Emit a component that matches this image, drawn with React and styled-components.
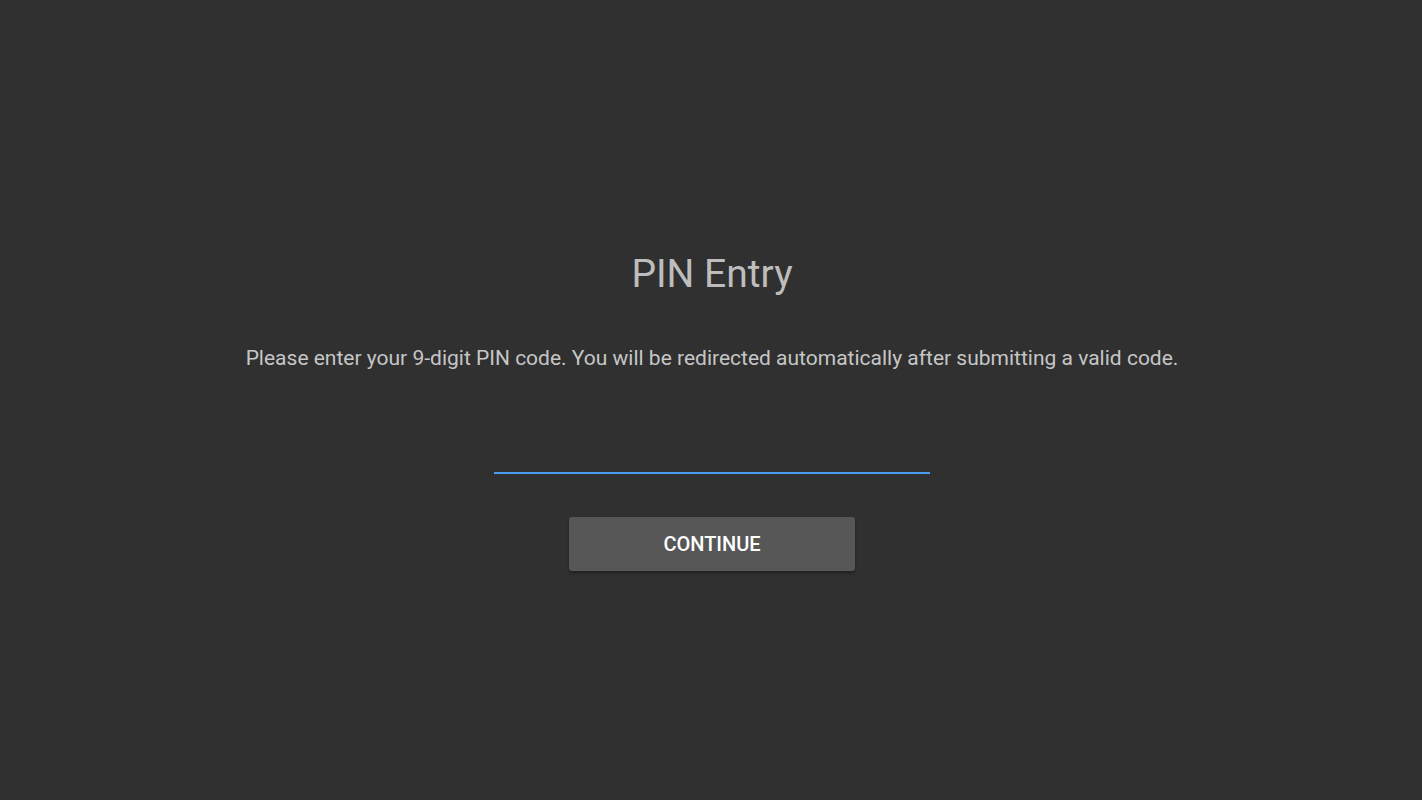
import React from 'react';
import styled, {createGlobalStyle} from 'styled-components';

const GlobalStyle = createGlobalStyle`
  html, body {
    margin: 0;
    padding: 0;
    background: #303030;
  }
  body {
    font-family: Roboto, "Liberation Sans", sans-serif;
  }
`;

const Page = styled.div`
  width: 100%;
  height: 800px;
  background: #303030;
  display: flex;
  flex-direction: column;
  align-items: center;
  padding: 250px 0 0 2px;
  box-sizing: border-box;
`;

const Title = styled.h1`
  margin: 0;
  font-size: 39px;
  font-weight: 400;
  line-height: 48px;
  color: #bdbdbd;
`;

const Message = styled.p`
  margin: 48px 0 0;
  font-size: 21px;
  line-height: 24px;
  color: #c6c6c6;
`;

const PinInput = styled.input`
  margin-top: 64px;
  width: 436px;
  height: 40px;
  box-sizing: border-box;
  background: transparent;
  border: none;
  border-bottom: 2px solid #4a9cec;
  outline: none;
  color: #e0e0e0;
  font-family: inherit;
  font-size: 22px;
  text-align: center;
`;

const ContinueButton = styled.button`
  margin-top: 43px;
  width: 286px;
  height: 54px;
  border: none;
  border-radius: 3px;
  background: #575757;
  color: #ffffff;
  font-family: inherit;
  font-size: 20px;
  font-weight: 500;
  box-shadow: 0 2px 3px rgba(0, 0, 0, 0.35);
  cursor: pointer;
`;

export default function App() {
  return (
    <>
      <GlobalStyle />
      <Page>
        <Title>PIN Entry</Title>
        <Message>
          Please enter your 9-digit PIN code. You will be redirected automatically after
          submitting a valid code.
        </Message>
        <PinInput type="text" />
        <ContinueButton>CONTINUE</ContinueButton>
      </Page>
    </>
  );
}
